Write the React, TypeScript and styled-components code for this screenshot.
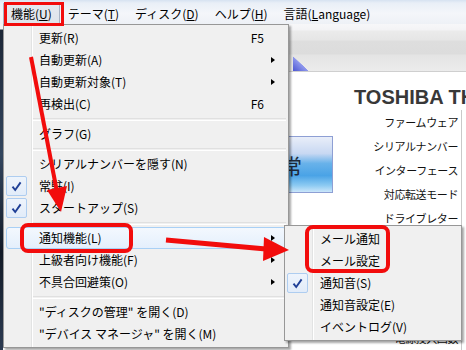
import React from "react";
import styled, { createGlobalStyle } from "styled-components";

const GlobalStyle = createGlobalStyle`
  html, body {
    margin: 0;
    padding: 0;
    background: #ffffff;
  }
  body {
    font-family: "Noto Sans CJK JP", "Noto Sans", sans-serif;
  }
`;

const Screen = styled.div`
  position: relative;
  width: 466px;
  height: 350px;
  overflow: hidden;
  background: #f0f0f0;
  font-family: "Noto Sans CJK JP", "Noto Sans", sans-serif;
  font-size: 12px;
  color: #000;
`;

/* ---------- menu bar ---------- */

const MenuBar = styled.div`
  display: flex;
  align-items: stretch;
  height: 24px;
  box-sizing: border-box;
  padding: 3px 0 0 3px;
  background: linear-gradient(#d6e2f1 0, #e9eff7 3px, #f4f6fa 55%, #eef1f6 100%);
`;

const BarItem = styled.div<{ $pressed?: boolean }>`
  display: flex;
  align-items: center;
  padding: 0 7px;
  line-height: 20px;
  white-space: nowrap;
  border: 1px solid ${(p) => (p.$pressed ? "#a7b3c4" : "transparent")};
  border-bottom: none;
  background: ${(p) => (p.$pressed ? "linear-gradient(#e4e9f0, #dfe4eb)" : "transparent")};
`;

/* ---------- background application window ---------- */

const Workspace = styled.div`
  display: flex;
  height: 326px;
`;

const DesktopStrip = styled.div`
  width: 3px;
  background: linear-gradient(#f4f4f4 0, #f4f4f4 5px, #1c2636 6px, #33465f 40%, #121a26 70%, #2c3b52 100%);
`;

const AppWindow = styled.div`
  flex: 1;
  display: flex;
  flex-direction: column;
  background: #ffffff;
  overflow: hidden;
`;

const Toolbar = styled.div`
  flex-shrink: 0;
  height: 48px;
  box-sizing: border-box;
  border-bottom: 1px solid #cfcfcf;
  background: linear-gradient(
    #f7f7f9 0,
    #f3f3f5 6px,
    #ebebeb 7px,
    #e6e6e6 16px,
    #dedede 17px,
    #dcdcdc 30px,
    #e4e4e4 31px,
    #ececec 47px
  );
  padding-left: 290px;
  display: flex;
  align-items: flex-end;
`;

const CornerMark = styled.div`
  width: 16px;
  height: 15px;
  background: linear-gradient(to top right, #4c56d2 0, #8f98ec 48%, transparent 50%);
`;

const Body = styled.div`
  flex: 1;
  display: flex;
  flex-direction: column;
  padding-left: 226px;
  min-height: 0;
`;

const Title = styled.div`
  flex-shrink: 0;
  height: 38px;
  box-sizing: border-box;
  padding: 14px 0 0 125px;
  font-family: "Liberation Sans", Arial, sans-serif;
  font-weight: bold;
  font-size: 20px;
  line-height: 22px;
  color: #383838;
  white-space: nowrap;
`;

const DetailRow = styled.div`
  display: flex;
  align-items: flex-start;
`;

const StatusButton = styled.div`
  flex-shrink: 0;
  width: 104px;
  height: 57px;
  margin-top: 26px;
  box-sizing: border-box;
  border: 1px solid #8e9fd4;
  display: flex;
  align-items: center;
  justify-content: center;
  font-size: 21px;
  color: #1e2a3a;
  background: linear-gradient(
    #e9eef9 0,
    #c8d8f2 30%,
    #68b2ea 48%,
    #4aa3e6 70%,
    #8ccaf2 88%,
    #cbe6fa 100%
  );
`;

const LabelColumn = styled.div`
  flex-shrink: 0;
  width: 128px;
  display: flex;
  flex-direction: column;
  border-right: 1px solid #c9c9c9;
  padding-bottom: 40px;
`;

const FieldLabel = styled.div`
  height: 24px;
  line-height: 24px;
  text-align: right;
  padding-right: 3px;
  font-size: 11px;
  letter-spacing: -0.4px;
  white-space: nowrap;
  color: #111;
`;

/* ---------- context menus ---------- */

const MenuPanel = styled.div<{ $left: number; $top: number; $width: number }>`
  position: absolute;
  left: ${(p) => p.$left}px;
  top: ${(p) => p.$top}px;
  width: ${(p) => p.$width}px;
  box-sizing: border-box;
  padding: 2px;
  border: 1px solid #979797;
  background-color: #f0f0f0;
  background-image: linear-gradient(
    to right,
    transparent 27px,
    #e2e3e3 27px,
    #e2e3e3 28px,
    #ffffff 28px,
    #ffffff 29px,
    transparent 29px
  );
  box-shadow: 2px 2px 2px rgba(0, 0, 0, 0.35);
`;

const MenuItem = styled.div<{ $hot?: boolean }>`
  position: relative;
  display: flex;
  align-items: center;
  height: 22px;
  box-sizing: border-box;
  padding-left: 32px;
  white-space: nowrap;
  border: 1px solid ${(p) => (p.$hot ? "#a9d0f5" : "transparent")};
  border-radius: 3px;
  background: ${(p) => (p.$hot ? "linear-gradient(#f3f8fe, #e4effc)" : "transparent")};
`;

const ItemLabel = styled.span`
  flex: 1;
  line-height: 20px;
`;

const Shortcut = styled.span`
  line-height: 20px;
`;

const ArrowCell = styled.span`
  width: 21px;
  display: flex;
  align-items: center;
`;

const SubArrow = styled.span`
  margin-left: 7px;
  width: 0;
  height: 0;
  border-left: 4px solid #000;
  border-top: 3.5px solid transparent;
  border-bottom: 3.5px solid transparent;
`;

const CheckBox = styled.span`
  position: absolute;
  left: -1px;
  top: 0;
  width: 21px;
  height: 20px;
  box-sizing: border-box;
  border: 1px solid #aecdf0;
  border-radius: 2px;
  background: linear-gradient(#eef4fc, #e2ecf9);
  display: flex;
  align-items: center;
  justify-content: center;
`;

const Separator = styled.div`
  height: 8px;
  margin-left: 27px;
  display: flex;
  align-items: center;
  &::after {
    content: "";
    flex: 1;
    height: 1px;
    border-top: 1px solid #e0e0e0;
    border-bottom: 1px solid #ffffff;
  }
`;

/* ---------- annotations ---------- */

const Annotations = styled.svg`
  position: absolute;
  left: 0;
  top: 0;
  pointer-events: none;
`;

const Check = () => (
  <svg width="11" height="11" viewBox="0 0 11 11">
    <path d="M1.5 5.6 L4.2 9 L9.6 1.4" fill="none" stroke="#1f3f96" strokeWidth="1.9" />
  </svg>
);

type Entry =
  | { sep: true }
  | {
      sep?: false;
      label: React.ReactNode;
      key?: string;
      sub?: boolean;
      checked?: boolean;
      hot?: boolean;
    };

const mainMenu: Entry[] = [
  { label: "更新(R)", key: "F5" },
  { label: "自動更新(A)", sub: true },
  { label: "自動更新対象(T)", sub: true },
  { label: "再検出(C)", key: "F6" },
  { sep: true },
  { label: "グラフ(G)" },
  { sep: true },
  { label: "シリアルナンバーを隠す(N)" },
  { label: "常駐(I)", checked: true },
  { label: "スタートアップ(S)", checked: true },
  { sep: true },
  { label: "通知機能(L)", sub: true, hot: true },
  { label: "上級者向け機能(F)", sub: true },
  { label: "不具合回避策(O)", sub: true },
  { sep: true },
  { label: "\"ディスクの管理\" を開く(D)" },
  { label: "\"デバイス マネージャ\" を開く(M)" },
];

const notifyMenu: Entry[] = [
  { label: "メール通知" },
  { label: "メール設定" },
  { label: "通知音(S)", checked: true },
  { label: "通知音設定(E)" },
  { label: "イベントログ(V)" },
];

function Menu({
  entries,
  left,
  top,
  width,
  arrows,
}: {
  entries: Entry[];
  left: number;
  top: number;
  width: number;
  arrows: boolean;
}) {
  return (
    <MenuPanel $left={left} $top={top} $width={width}>
      {entries.map((e, i) =>
        e.sep ? (
          <Separator key={i} />
        ) : (
          <MenuItem key={i} $hot={e.hot}>
            {e.checked && (
              <CheckBox>
                <Check />
              </CheckBox>
            )}
            <ItemLabel>{e.label}</ItemLabel>
            {e.key && <Shortcut>{e.key}</Shortcut>}
            {arrows && <ArrowCell>{e.sub && <SubArrow />}</ArrowCell>}
          </MenuItem>
        )
      )}
    </MenuPanel>
  );
}

const fields = [
  "ファームウェア",
  "シリアルナンバー",
  "インターフェース",
  "対応転送モード",
  "ドライブレター",
  "対応機能",
  "バッファサイズ",
  "NV キャッシュサイズ",
  "回転数",
  "電源投入回数",
];

export default function App() {
  return (
    <>
      <GlobalStyle />
      <Screen>
        <MenuBar>
          <BarItem $pressed>
            機能(<u>U</u>)
          </BarItem>
          <BarItem>
            テーマ(<u>T</u>)
          </BarItem>
          <BarItem>
            ディスク(<u>D</u>)
          </BarItem>
          <BarItem>
            ヘルプ(<u>H</u>)
          </BarItem>
          <BarItem>
            言語(<u>L</u>anguage)
          </BarItem>
        </MenuBar>

        <Workspace>
          <DesktopStrip />
          <AppWindow>
            <Toolbar>
              <CornerMark />
            </Toolbar>
            <Body>
              <Title>TOSHIBA THNSNH128GCST</Title>
              <DetailRow>
                <StatusButton>正常</StatusButton>
                <LabelColumn>
                  {fields.map((f) => (
                    <FieldLabel key={f}>{f}</FieldLabel>
                  ))}
                </LabelColumn>
              </DetailRow>
            </Body>
          </AppWindow>
        </Workspace>

        <Menu entries={mainMenu} left={3} top={24} width={286} arrows />
        <Menu entries={notifyMenu} left={284} top={225} width={178} arrows={false} />

        <Annotations width="466" height="350" viewBox="0 0 466 350">
          <rect x="5.5" y="3.5" width="57" height="21" fill="none" stroke="#f20c0c" strokeWidth="3" />
          <rect x="22" y="225" width="109" height="26" rx="6" fill="none" stroke="#f20c0c" strokeWidth="4" />
          <rect x="307" y="227" width="81" height="44" rx="6" fill="none" stroke="#f20c0c" strokeWidth="4" />
          <line x1="31" y1="57" x2="57" y2="192" stroke="#f20c0c" strokeWidth="4" />
          <polygon points="47,190 67,186 61,212" fill="#f20c0c" />
          <line x1="166" y1="240" x2="266" y2="249" stroke="#f20c0c" strokeWidth="5" />
          <polygon points="264,237 263,261 289,250" fill="#f20c0c" />
        </Annotations>
      </Screen>
    </>
  );
}
